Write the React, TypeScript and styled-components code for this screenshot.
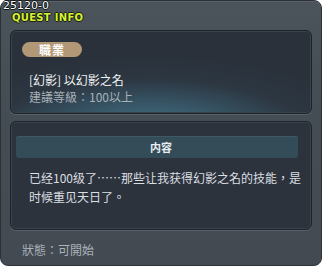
import React from 'react'
import styled, { createGlobalStyle } from 'styled-components'

const GlobalStyle = createGlobalStyle`
    html, body {
        margin: 0;
        padding: 0;
        background: #ffffff;
    }
    body {
        font-family: "Noto Sans CJK TC", "Noto Sans CJK SC", "Liberation Sans", sans-serif;
    }
`

const StyledFrame = styled.div`
    position: relative;
    box-sizing: border-box;
    width: 322px;
    height: 266px;
    border-radius: 8px;
    border: 1px solid #2c3137;
    background: linear-gradient(to bottom, #4b535b 0%, #444c54 40%, #434a52 100%);
    box-shadow: inset 0 1px 0 #5a636c;
    padding: 0 9px 0 9px;
    display: flex;
    flex-direction: column;
`

const StyledQuestId = styled.div`
    position: absolute;
    left: 2px;
    top: -1px;
    font-family: "DejaVu Sans", sans-serif;
    font-size: 11px;
    line-height: 12px;
    color: #ffffff;
    text-shadow: -1px 0 #101418, 1px 0 #101418, 0 -1px #101418, 0 1px #101418;
`

const StyledHeader = styled.div`
    height: 29px;
    display: flex;
    align-items: flex-start;
`

const StyledTitle = styled.div`
    margin-top: 10px;
    margin-left: 2px;
    font-family: "DejaVu Sans", sans-serif;
    font-weight: bold;
    font-size: 10px;
    line-height: 13px;
    letter-spacing: 0.3px;
    color: #d6f032;
    text-shadow: -1px 0 #1a2010, 1px 0 #1a2010, 0 -1px #1a2010, 0 1px #1a2010;
`

const StyledPanel = styled.div<{ $height: number; $glow?: boolean }>`
    box-sizing: border-box;
    height: ${p => p.$height}px;
    border-radius: 6px;
    border: 1px solid #1e2329;
    box-shadow: 0 1px 0 #59626b, inset 0 0 0 1px #3a424b;
    background: ${p => p.$glow
        ? 'radial-gradient(ellipse 75% 95% at 46% 125%, #4a7685 0%, #38596a 35%, #2c3742 70%, #2a313b 100%)'
        : '#2d333c'};
`

const StyledJobPanel = styled(StyledPanel)`
    padding: 11px 0 0 11px;
`

const StyledBadge = styled.div`
    width: 60px;
    height: 15px;
    border-radius: 8px;
    background: #b39877;
    color: #ffffff;
    font-size: 12px;
    font-weight: bold;
    line-height: 15px;
    text-align: center;
    letter-spacing: 1px;
`

const StyledQuestName = styled.div`
    margin-top: 14px;
    margin-left: 7px;
    font-size: 12px;
    line-height: 17px;
    color: #f2f4f6;
`

const StyledRequire = styled.div`
    margin-left: 7px;
    font-size: 12px;
    line-height: 17px;
    color: #a9b0b8;
`

const StyledContentPanel = styled(StyledPanel)`
    margin-top: 7px;
    padding: 14px 13px 0 5px;
`

const StyledSectionBar = styled.div`
    height: 22px;
    border-radius: 3px;
    background: #344b58;
    box-shadow: inset 0 1px 0 #3f5866;
    color: #e8eef2;
    font-size: 11px;
    font-weight: bold;
    line-height: 22px;
    text-align: center;
    padding-left: 8px;
`

const StyledBody = styled.div`
    margin-top: 10px;
    margin-right: -4px;
    padding-left: 13px;
    font-size: 12px;
    line-height: 19px;
    color: #dadfe3;
`

const StyledStatus = styled.div`
    margin-top: 12px;
    margin-left: 12px;
    font-size: 12px;
    line-height: 16px;
    color: #aab2ba;
`

const App = () => {
    return (
        <>
            <GlobalStyle />
            <StyledFrame>
                <StyledQuestId>25120-0</StyledQuestId>
                <StyledHeader>
                    <StyledTitle>QUEST INFO</StyledTitle>
                </StyledHeader>
                <StyledJobPanel $height={84} $glow>
                    <StyledBadge>職業</StyledBadge>
                    <StyledQuestName>[幻影] 以幻影之名</StyledQuestName>
                    <StyledRequire>建議等級：100以上</StyledRequire>
                </StyledJobPanel>
                <StyledContentPanel $height={109}>
                    <StyledSectionBar>内容</StyledSectionBar>
                    <StyledBody>
                        已经100级了……那些让我获得幻影之名的技能，是时候重见天日了。
                    </StyledBody>
                </StyledContentPanel>
                <StyledStatus>狀態：可開始</StyledStatus>
            </StyledFrame>
        </>
    )
}
export default App
